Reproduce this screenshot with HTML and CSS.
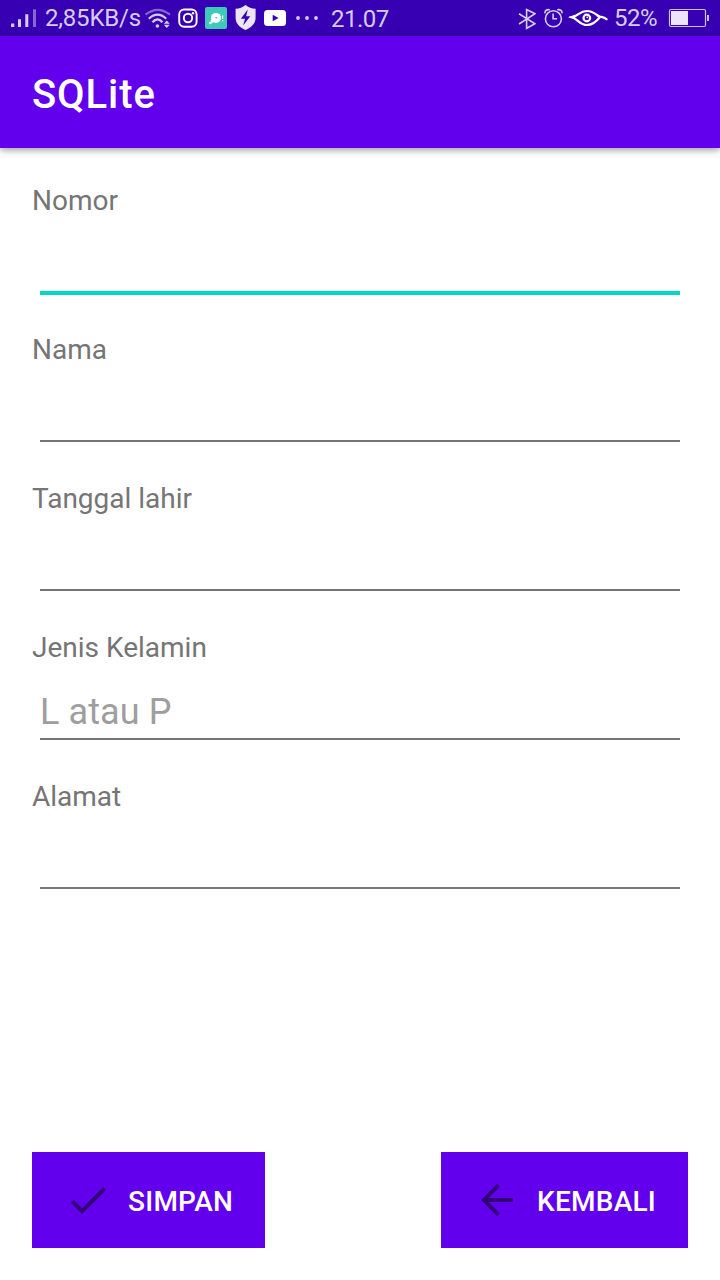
FILE: index.html
```html
<!DOCTYPE html>
<html lang="id">
<head>
<meta charset="utf-8">
<title>SQLite</title>
<link rel="stylesheet" href="styles.css">
</head>
<body>
<div class="screen">
  <div class="status">
    <svg class="signal" width="26" height="36" viewBox="0 0 26 36" fill="#d7ccf0"><path d="M0 23.500h3.300V27H0zM7 19.300h3V27H7zM14.300 14.300h3V27h-3z"/><path d="M22 9.300h3V27h-3z" opacity=".5"/></svg>
    <span class="speed">2,85KB/s</span>
    <svg class="wifi" width="28" height="36" viewBox="144 0 28 36" fill="none" stroke="#d7ccf0" stroke-width="2.200"><path d="M145.500 14.700Q157.700 5 170 14.700" opacity=".5"/><path d="M148.800 18.700Q157.500 10.500 166.200 18.700M152.500 22.300Q157.500 16.300 162.500 22.300"/><circle cx="157.400" cy="26" r="1.800" fill="#d7ccf0" stroke="none"/><path d="M163.800 23.700L166.800 20.400L169.800 23.700zM163.800 24.700L166.800 28L169.800 24.700z" fill="#d7ccf0" stroke="none"/></svg>
    <svg class="insta" width="20" height="36" viewBox="178 0 20 36" fill="none" stroke="#fff" stroke-width="1.900"><rect x="179.200" y="9.500" width="17.400" height="17.200" rx="5"/><circle cx="188" cy="18" r="4.200"/><circle cx="193" cy="13.200" r="1.200" fill="#fff" stroke="none"/></svg>
    <svg class="app" width="22" height="36" viewBox="205 0 22 36"><rect x="205" y="7" width="22" height="22" rx="2" fill="#3fc9b7"/><g fill="#fff"><circle cx="216" cy="17.900" r="5"/><circle cx="212.300" cy="21" r="1.800"/><circle cx="210.400" cy="23" r="1.300"/><path d="M222 15.500h1.200v3.500H222zM222 20h1.200v1.400H222z"/></g><path d="M214.900 17h2.600l-1.300 2z" fill="#3fc9b7"/></svg>
    <svg class="shield" width="22" height="36" viewBox="235 0 22 36"><path d="M245.500 5C242.500 7.500 239.500 8.500 235.600 8.800V17.500C235.600 23.500 239.500 27.500 245.500 30C251.500 27.500 255.600 23.500 255.600 17.500V8.800C251.500 8.500 248.500 7.500 245.500 5z" fill="#ebe5f7"/><path d="M247.800 9.500L240.800 18.800H245L243.200 25.500L250.300 16.200H246.100z" fill="#3700b3"/></svg>
    <svg class="video" width="22" height="36" viewBox="264 0 22 36"><rect x="264" y="10" width="22" height="16" rx="3.500" fill="#fff"/><path d="M272.700 14.700L278.600 18L272.700 21.200z" fill="#3700b3"/></svg>
    <svg class="dots" width="24" height="36" viewBox="295 0 24 36" fill="#d7ccf0"><circle cx="298" cy="18" r="1.900"/><circle cx="307" cy="18" r="1.900"/><circle cx="316" cy="18" r="1.900"/></svg>
    <span class="clock">21.07</span>
    <svg class="bluetooth" width="18" height="36" viewBox="518 0 18 36" fill="none" stroke="#d7ccf0" stroke-width="1.600"><path d="M519 13.700L535 23.700L526.600 28.300V9.500L535 13.700L519 24"/></svg>
    <svg class="alarm" width="20" height="36" viewBox="544 0 20 36" fill="none" stroke="#d7ccf0" stroke-width="1.600"><circle cx="553.400" cy="18.800" r="8"/><path d="M553.100 13.500V18.800H557M545 13.300C544.700 10.500 547 9.200 549.800 9.800M562 13.300C562.300 10.500 560 9.200 557.200 9.800"/></svg>
    <svg class="eye" width="40" height="36" viewBox="568 0 40 36" fill="none" stroke="#fff" stroke-width="2.200"><path d="M572.500 17.200C578.500 16 579.500 11 587 11C593 11 596 14.500 600 17C596.500 21.500 593 25 587 25C580 25 578 19.500 572.500 17.200zM597 15.500C601 17.800 604 16 607.200 19.800"/><path d="M568 17.200L575 14.800V19.600z" fill="#fff" stroke="none"/><circle cx="586.800" cy="18" r="3.300"/><circle cx="587.200" cy="17.300" r=".9" fill="#fff" stroke="none"/></svg>
    <span class="percent">52%</span>
    <svg class="battery" width="41" height="36" viewBox="668 0 41 36"><rect x="669.500" y="9.500" width="36" height="17" rx="1.500" fill="none" stroke="#cdbfec" stroke-width="1.200"/><path d="M671 11h17v14h-17z" fill="#ebe5f7"/><path d="M707 15h2v6h-2z" fill="#cdbfec"/></svg>
  </div>
  <header class="appbar"><h1>SQLite</h1></header>
  <main class="form">
    <label class="field focused"><span>Nomor</span><input type="text"></label>
    <label class="field"><span>Nama</span><input type="text"></label>
    <label class="field"><span>Tanggal lahir</span><input type="text"></label>
    <label class="field"><span>Jenis Kelamin</span><input type="text" placeholder="L atau P"></label>
    <label class="field"><span>Alamat</span><input type="text"></label>
  </main>
  <footer class="actions">
    <button class="btn save" type="button"><svg width="48" height="48" viewBox="0 0 24 24"><path d="M9 16.170L4.830 12l-1.420 1.410L9 19 21 7l-1.410-1.410z"/></svg><span>SIMPAN</span></button>
    <button class="btn back" type="button"><svg width="48" height="48" viewBox="0 0 24 24"><path d="M20 11H7.830l5.590-5.590L12 4l-8 8 8 8 1.410-1.410L7.830 13H20z"/></svg><span>KEMBALI</span></button>
  </footer>
</div>
</body>
</html>
```

FILE: styles.css
```css
* { box-sizing: border-box; }
body { margin: 0; font-family: Roboto, "Liberation Sans", sans-serif; background: #fff; }
.screen { width: 720px; height: 1280px; display: flex; flex-direction: column; overflow: hidden; }

.status { height: 36px; flex: none; display: flex; background: #3700b3; color: #d7ccf0; font-size: 24px; line-height: 36px; white-space: nowrap; padding-left: 11px; }
.status svg, .status span { flex: none; display: block; }
.speed { width: 97px; margin-left: 8px; letter-spacing: -.2px; }
.wifi { margin-left: 2px; }
.insta { margin-left: 6px; }
.app { margin-left: 7px; }
.shield { margin-left: 8px; }
.video { margin-left: 7px; }
.dots { margin-left: 9px; }
.clock { width: 60px; margin-left: 12px; padding-top: 1px; letter-spacing: -.5px; }
.bluetooth { margin-left: 127px; }
.alarm { margin-left: 8px; }
.eye { margin-left: 4px; }
.percent { width: 46px; margin-left: 6px; letter-spacing: -.5px; }
.battery { margin-left: 8px; }

.appbar { height: 112px; flex: none; display: flex; align-items: center; padding: 6px 32px 0; background: #6200ee; box-shadow: 0 2px 7px rgba(0, 0, 0, .4); }
.appbar h1 { margin: 0; color: #fff; font-size: 40px; font-weight: 500; line-height: 48px; letter-spacing: .9px; }

.form { flex: 1; padding: 32px 32px 0; }
.field { display: flex; flex-direction: column; height: 149px; }
.field span { height: 38px; line-height: 42px; font-size: 28px; color: #757575; }
.field input { height: 75px; margin: 0 8px; padding: 21px 0 0; border: 0; border-bottom: 2px solid #757575; outline: 0; border-radius: 0; background: none; font: 36px Roboto, "Liberation Sans", sans-serif; letter-spacing: .1px; color: #212121; }
.field input::placeholder { color: #9e9e9e; opacity: 1; }
.field.focused input { height: 77px; border-bottom: 4px solid #03dac5; }

.actions { flex: none; display: flex; justify-content: space-between; padding: 0 32px 32px; }
.btn { display: flex; align-items: center; gap: 16px; height: 96px; padding: 0 0 0 32px; border: 0; background: #6200ee; color: #fff; font: 500 28px Roboto, "Liberation Sans", sans-serif; letter-spacing: .25px; }
.save { width: 233px; }
.back { width: 247px; }
.btn svg { fill: #310077; }
.btn span { padding-top: 2px; }
```
